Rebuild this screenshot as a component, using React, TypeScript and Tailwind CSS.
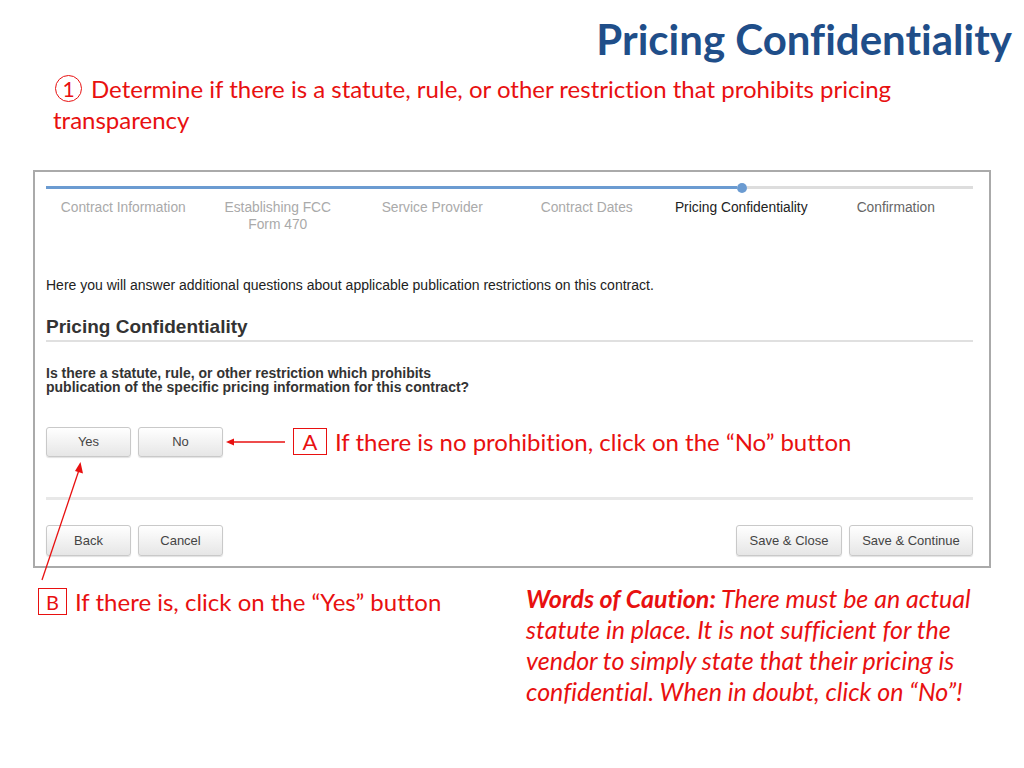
import React from "react";

const slideFont = {
  fontFamily: "Lato, 'Noto Sans', sans-serif",
  fontVariantLigatures: "none" as const,
};

function Btn({ label, w }: { label: string; w: string }) {
  return (
    <div
      className={`${w} flex items-center justify-center rounded-[3px] border border-[#c9c9c9] bg-gradient-to-b from-[#ffffff] to-[#e6e6e6] text-[13px] text-[#444] shadow-[0_1px_1px_rgba(0,0,0,0.12)]`}
    >
      {label}
    </div>
  );
}

const steps = [
  { t: ["Contract Information"], c: "text-[#aaaaaa]" },
  { t: ["Establishing FCC", "Form 470"], c: "text-[#aaaaaa]" },
  { t: ["Service Provider"], c: "text-[#aaaaaa]" },
  { t: ["Contract Dates"], c: "text-[#aaaaaa]" },
  { t: ["Pricing Confidentiality"], c: "text-[#222222]" },
  { t: ["Confirmation"], c: "text-[#666666]" },
];

export default function App() {
  return (
    <div className="relative w-[1024px] h-[768px] bg-white overflow-hidden">
      {/* Title */}
      <div className="pt-[15px] pr-[12px] flex justify-end" style={slideFont}>
        <div className="text-[42px] leading-[48px] font-bold text-[#1f4e89]">
          Pricing Confidentiality
        </div>
      </div>

      {/* Instruction */}
      <div
        className="mt-[10px] pl-[53px] text-[24px] leading-[31px] text-[#e81010]"
        style={slideFont}
      >
        <div className="whitespace-nowrap flex items-center h-[31px]">
          <span className="ml-[2px] mr-[9px] inline-flex items-center justify-center w-[27px] h-[27px] rounded-full border-[1.5px] border-[#e81010] text-[21px] leading-none">
            1
          </span>
          <span>Determine if there is a statute, rule, or other restriction that prohibits pricing</span>
        </div>
        <div>transparency</div>
      </div>

      {/* Screenshot box */}
      <div
        className="mt-[35px] ml-[33px] w-[958px] border-2 border-[#aaaaaa] pl-[11px] pt-[14px] pb-[10px]"
        style={{ fontFamily: "'Liberation Sans', Arial, sans-serif" }}
      >
        <div className="w-[927px]">
          {/* progress */}
          <div className="flex items-center h-[3px]">
            <div className="w-[691px] h-[3px] bg-[#6b9bd1]" />
            <div className="w-[10px] h-[10px] rounded-full bg-[#6b9bd1]" />
            <div className="flex-1 h-[3px] bg-[#dddddd]" />
          </div>
          <div className="mt-[10px] grid grid-cols-6 text-[13.8px] leading-[17px] text-center">
            {steps.map((s, i) => (
              <div key={i} className={s.c}>
                {s.t.map((l, j) => (
                  <div key={j}>{l}</div>
                ))}
              </div>
            ))}
          </div>

          <div className="mt-[44px] text-[14px] leading-[16px] text-[#222]">
            Here you will answer additional questions about applicable publication restrictions on this contract.
          </div>

          <div className="mt-[23px] pb-[2px] border-b-2 border-[#e0e0e0] text-[19px] leading-[22px] font-bold text-[#333]">
            Pricing Confidentiality
          </div>

          <div className="mt-[24px] text-[14px] leading-[14px] font-bold text-[#333]">
            <div>Is there a statute, rule, or other restriction which prohibits</div>
            <div>publication of the specific pricing information for this contract?</div>
          </div>

          {/* Yes / No row with annotation A */}
          <div className="mt-[32px] flex items-center">
            <div className="flex gap-[7px] h-[30px]">
              <Btn label="Yes" w="w-[85px]" />
              <Btn label="No" w="w-[85px]" />
            </div>
            <svg width="62" height="12" viewBox="0 0 62 12" className="ml-[2px]">
              <line x1="6" y1="6" x2="60" y2="6" stroke="#e81010" strokeWidth="1.3" />
              <polygon points="1,6 9,2.5 9,9.5" fill="#e81010" />
            </svg>
            <div
              className="ml-[6px] w-[34px] h-[27px] border-[1.5px] border-[#e81010] flex items-center justify-center text-[22px] text-[#e81010]"
              style={slideFont}
            >
              A
            </div>
            <div
              className="ml-[8px] text-[24px] leading-[31px] text-[#e81010] whitespace-nowrap"
              style={slideFont}
            >
              If there is no prohibition, click on the “No” button
            </div>
          </div>

          <div className="mt-[40px] h-[3px] bg-[#e8e8e8]" />

          <div className="mt-[25px] flex justify-between h-[31px]">
            <div className="flex gap-[7px]">
              <Btn label="Back" w="w-[85px]" />
              <Btn label="Cancel" w="w-[85px]" />
            </div>
            <div className="flex gap-[7px]">
              <Btn label="Save & Close" w="w-[106px]" />
              <Btn label="Save & Continue" w="w-[124px]" />
            </div>
          </div>
        </div>
      </div>

      {/* Bottom annotations */}
      <div className="mt-[15px] flex items-start" style={slideFont}>
        <div className="ml-[38px] w-[488px] mt-[3px] flex items-center">
          <div className="w-[29px] h-[27px] border-[1.5px] border-[#e81010] flex items-center justify-center text-[20px] text-[#e81010]">
            B
          </div>
          <div className="ml-[8px] text-[24px] leading-[31px] text-[#e81010] whitespace-nowrap">
            If there is, click on the “Yes” button
          </div>
        </div>
        <div className="text-[25px] leading-[31px] italic text-[#e81010] whitespace-nowrap">
          <span className="font-bold">Words of Caution:</span> There must be an actual
          <br />
          statute in place. It is not sufficient for the
          <br />
          vendor to simply state that their pricing is
          <br />
          confidential. When in doubt, click on “No”!
        </div>
      </div>

      {/* Arrow B overlay */}
      <svg
        className="absolute left-0 top-0 pointer-events-none"
        width="1024"
        height="768"
        viewBox="0 0 1024 768"
      >
        <line x1="42" y1="580" x2="79" y2="470" stroke="#e81010" strokeWidth="1.3" />
        <polygon points="80.5,462 75,471 83,473.5" fill="#e81010" />
      </svg>
    </div>
  );
}
